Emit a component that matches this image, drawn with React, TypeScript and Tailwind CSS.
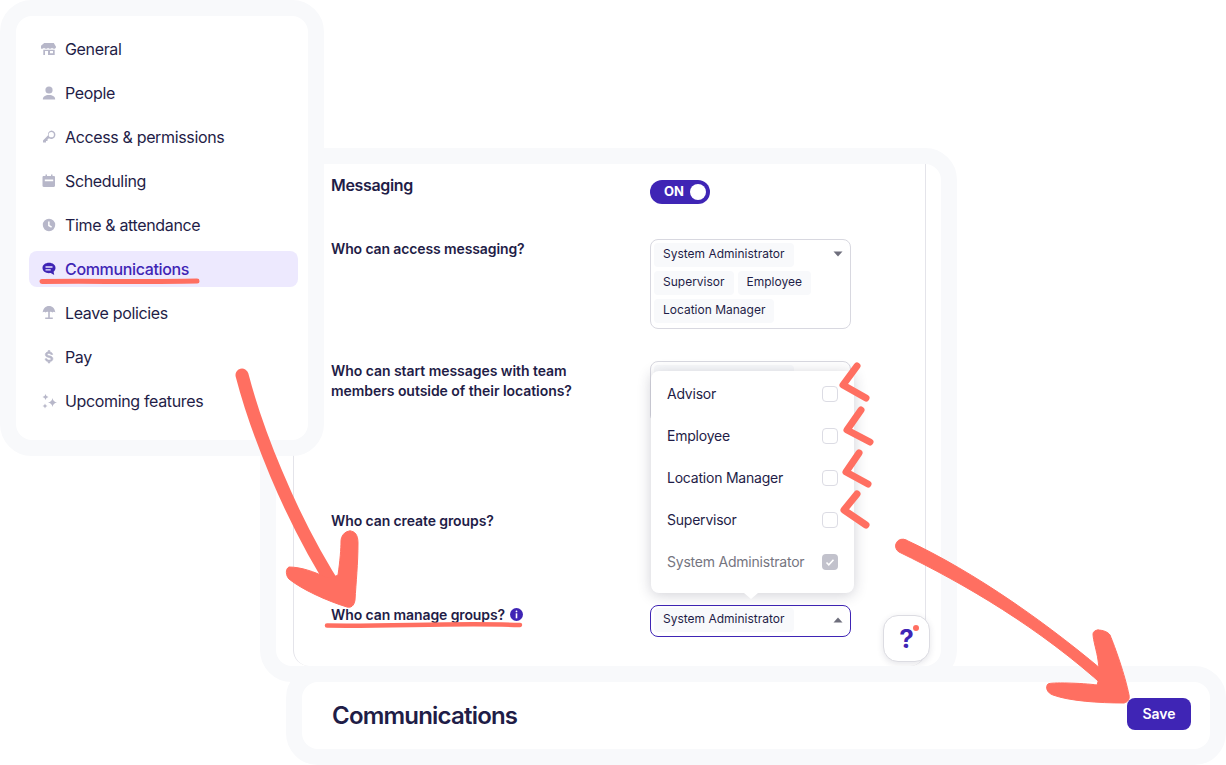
import type { ReactNode } from "react";

const navItems: { label: string; icon: ReactNode; active?: boolean }[] = [
  {
    label: "General",
    icon: (
      <>
        <path d="M3.200 2h9.600l2.200 3.700c0 1.300-1 2.100-2 2.100-.8 0-1.500-.4-2-1-.4.600-1.100 1-2 1s-1.600-.4-2-1c-.4.600-1.200 1-2 1s-1.500-.4-2-1c-.5.600-1.200 1-2 1-1 0-2-.8-2-2.100z" />
        <path fillRule="evenodd" d="M2.300 8.700h11.400v5.300H2.300zM4 10v4h3v-4zm5 0v2.300h3V10z" />
      </>
    ),
  },
  {
    label: "People",
    icon: (
      <>
        <circle cx="8" cy="5" r="3.600" />
        <path d="M1.800 14.500c0-2.900 2.500-4.500 6.200-4.500s6.200 1.600 6.200 4.500z" />
      </>
    ),
  },
  {
    label: "Access & permissions",
    icon: (
      <path
        fillRule="evenodd"
        d="M10.300 1.500a4.200 4.200 0 1 1-2.400 7.700l-1.400 1.400v1.500H5v1.500H2v-2.200l5.100-5.100a4.200 4.200 0 0 1 3.200-4.800zm0 1.600a2.600 2.600 0 1 0 0 5.200 2.600 2.600 0 0 0 0-5.200z"
      />
    ),
  },
  {
    label: "Scheduling",
    icon: (
      <path
        fillRule="evenodd"
        d="M4.500 1.500h1.500V3h4V1.500h1.500V3h1.300c.7 0 1.200.5 1.200 1.200v8.600c0 .7-.5 1.200-1.200 1.200H2.700c-.7 0-1.200-.5-1.200-1.200V4.200C1.500 3.500 2 3 2.700 3h1.800zM3.800 6.500v1.700h8.400V6.500z"
      />
    ),
  },
  {
    label: "Time & attendance",
    icon: (
      <path
        fillRule="evenodd"
        d="M8 1.800a6.200 6.200 0 1 1 0 12.400A6.200 6.200 0 0 1 8 1.800zm-.9 2.700v4.400l3.100 1.800.8-1.300-2.400-1.400V4.500z"
      />
    ),
  },
  {
    label: "Communications",
    active: true,
    icon: (
      <path
        fillRule="evenodd"
        d="M8 1.800c3.700 0 6.500 2.200 6.500 5.200 0 1.500-.7 2.800-1.900 3.700l.6 3.200-3.500-1.800c-.5.100-1.100.1-1.700.1-3.700 0-6.500-2.200-6.500-5.200S4.300 1.800 8 1.800zM4.500 5.300v1.500h7V5.300zm0 2.900v1.400h5.200V8.200z"
      />
    ),
  },
  {
    label: "Leave policies",
    icon: (
      <>
        <path d="M8 1c3.400 0 6.100 2.700 6.300 6.500-.9-.9-1.900-.9-2.800 0-.7-.8-1.600-1-2.700-.6V8H7.200V6.900c-1.100-.4-2-.2-2.700.6-.9-.9-1.900-.9-2.800 0C1.900 3.700 4.600 1 8 1z" />
        <path d="M7.200 8h1.600v4.500h3V14H4.200v-1.500h3z" />
      </>
    ),
  },
  {
    label: "Pay",
    icon: (
      <path
        stroke="currentColor"
        strokeWidth=".6"
        d="M7.200 1.500h1.600v1.400c1.500.2 2.700 1.100 2.900 2.600H9.900c-.2-.7-.9-1.100-1.900-1.100-1.100 0-1.800.4-1.800 1.100 0 .8.800 1 2.100 1.300 1.900.4 3.600 1 3.600 3 0 1.600-1.200 2.500-3.100 2.800v1.400H7.200v-1.400c-1.700-.2-3-1.200-3.100-2.800H6c.1.800.9 1.300 2 1.300 1.200 0 1.900-.4 1.900-1.200 0-.8-.8-1.100-2.200-1.400-1.800-.4-3.400-1-3.400-2.900 0-1.500 1.200-2.500 2.900-2.800z"
      />
    ),
  },
  {
    label: "Upcoming features",
    icon: (
      <>
        <path d="M11.500 5q.6 3.900 4.500 4.500-3.900.6-4.500 4.500-.6-3.900-4.500-4.500 3.900-.6 4.500-4.500z" />
        <path d="M4.500 1q.4 2.600 3 3-2.600.4-3 3-.4-2.600-3-3 2.600-.4 3-3z" />
        <path d="M4 10.500q.3 2.200 2.500 2.500-2.200.3-2.500 2.500-.3-2.200-2.500-2.500 2.200-.3 2.500-2.500z" />
      </>
    ),
  },
];

const Chip = ({ children }: { children: ReactNode }) => (
  <span className="h-6 px-[9px] pb-[2px] flex items-center rounded bg-[#f8f9fb] text-xs whitespace-nowrap">
    {children}
  </span>
);

const Caret = ({ up }: { up?: boolean }) => (
  <svg width="10" height="6" viewBox="0 0 10 6" className="absolute right-[7px] top-[11px] fill-[#6e6e7c]">
    <path d={up ? "M5 .5l4.500 5h-9z" : "M.5.500h9l-4.500 5z"} />
  </svg>
);

const roles = ["Advisor", "Employee", "Location Manager", "Supervisor"];

const SelectBox = ({ chips, className, up }: { chips: string[]; className: string; up?: boolean }) => (
  <div className={`relative w-[201px] rounded-lg border bg-white pl-[3px] flex flex-wrap gap-1 content-start ${className}`}>
    {chips.map((chip) => (
      <Chip key={chip}>{chip}</Chip>
    ))}
    <Caret up={up} />
  </div>
);

const RolePopup = () => (
  <div className="absolute left-[357px] top-[207px] w-[203px] h-[222px] bg-white rounded-lg pt-[2px] tracking-[-0.22px] shadow-[0_2px_14px_rgba(40,40,70,0.22)]">
    {roles.map((role) => (
      <div key={role} className="h-[42px] pl-4 pr-4 flex items-center justify-between text-sm text-[#1f1d47]">
        {role}
        <span className="w-4 h-4 rounded border border-[#dcdce4] bg-white" />
      </div>
    ))}
    <div className="h-[42px] pl-4 pr-4 flex items-center justify-between text-sm text-[#75757f]">
      System Administrator
      <span className="w-4 h-4 rounded bg-[#c2c2cc] flex items-center justify-center">
        <svg width="10" height="10" viewBox="0 0 10 10" fill="none" stroke="white" strokeWidth="1.600">
          <path d="M1.500 5.500l2.300 2.300 4.700-5" />
        </svg>
      </span>
    </div>
    <div className="absolute left-[93px] bottom-[-6px] w-0 h-0 border-x-[7px] border-x-transparent border-t-[6px] border-t-white" />
  </div>
);

const Annotations = () => (
  <svg width="1226" height="765" viewBox="0 0 1226 765" className="absolute inset-0 z-30 pointer-events-none" fill="none" stroke="#ff6f61" strokeLinecap="round" strokeLinejoin="round">
    <path d="M42 281.500c50-.5 100 .5 155-.5" strokeWidth="5" />
    <path d="M327 625.500c65 1 130-3 193-.5" strokeWidth="4.500" />
    <path d="M242 375c13 50 46 140 96 217" strokeWidth="13" />
    <path d="M350 531c5 0 8 4 8 12 0 20-2 40-3 57-1 6-4 8-8 7-20-6-46-18-58-28-3-3-4-10 0-12 12 0 26 5 36 10 4 1 10 0 13-2 2-14 3-26 3-34 0-4 3-10 9-10z" fill="#ff6f61" strokeWidth="1" />
    <path d="M906 540C975 572 1050 625 1114 680L1106 688C1040 628 965 584 899 552A6.500 6.500 0 0 1 906 540z" fill="#ff6f61" strokeWidth="1" />
    <path d="M1098 630c5 0 10 2 12 5 5 12 15 40 19 60 1 4-1 7-5 8-25 0-55-2-71-8-6-2-8-8-5-11 2-2 35-1 49 1 3-8 2-18 1-25-1-8-5-20-5-26 0-2 2-4 5-4z" fill="#ff6f61" strokeWidth="1" />
    <path d="M857 366l-14 19 23 13" strokeWidth="7" />
    <path d="M861 410l-14 20 23 12" strokeWidth="7" />
    <path d="M859 453l-13 19 22 12" strokeWidth="7" />
    <path d="M857 494l-13 16 22 15" strokeWidth="7" />
  </svg>
);

export default function App() {
  return (
    <div className="relative w-[1226px] h-[765px] overflow-hidden bg-white font-[Inter,sans-serif] text-[#1f1d47]">
      {/* messaging settings window */}
      <div className="absolute left-[260px] top-[148px] w-[697px] h-[534px] rounded-[32px] border-16 border-[#f8f9fb] bg-white">
        <div className="relative ml-[17px] mr-[15px] h-full rounded-b-2xl border-x border-[#e4e4ea] pl-[37px] pt-[9px]">
          <div className="flex h-[66px]">
            <div className="w-[319px] text-base font-semibold leading-6 tracking-[-0.35px]">Messaging</div>
            <div className="mt-[7px] w-[60px] h-6 rounded-full bg-[#3f25b5] flex items-center justify-between pl-[14px] pr-[4px]">
              <span className="text-[13px] font-bold text-white">ON</span>
              <span className="w-4 h-4 rounded-full bg-white" />
            </div>
          </div>
          <div className="flex h-[122px]">
            <div className="w-[319px] text-sm font-semibold leading-5 tracking-[-0.12px]">Who can access messaging?</div>
            <SelectBox chips={["System Administrator", "Supervisor", "Employee", "Location Manager"]} className="h-[90px] pt-[3px] border-[#d8d8e0]" />
          </div>
          <div className="flex h-[150px]">
            <div className="w-[319px] text-sm font-semibold leading-5 tracking-[-0.05px]">
              <div className="w-[270px]">Who can start messages with team members outside of their locations?</div>
            </div>
            {/* chip label sits under the popup, only the chip background peeks out */}
            <SelectBox chips={["System Administrator"]} className="h-[62px] pt-[3px] border-[#d8d8e0] text-transparent" />
          </div>
          <div className="h-[94px] text-sm font-semibold leading-5 tracking-[-0.1px]">Who can create groups?</div>
          <div className="flex">
            <div className="w-[319px] flex gap-[5px] text-sm font-semibold leading-5 tracking-[-0.1px]">
              Who can manage groups?
              <svg width="13" height="13" viewBox="0 0 13 13" className="mt-[3px]">
                <circle cx="6.500" cy="6.500" r="6.500" fill="#3f25b5" />
                <rect x="5.600" y="2.500" width="1.800" height="1.800" rx=".9" fill="white" />
                <rect x="5.700" y="5.300" width="1.600" height="5" fill="white" />
              </svg>
            </div>
            <SelectBox chips={["System Administrator"]} className="h-8 pt-[2px] border-[#3f25b5]" up />
          </div>
          <RolePopup />
        </div>
        <div className="absolute left-[607px] top-[451px] w-[47px] h-[47px] rounded-[15px] border border-[#dcdce2] bg-white shadow-[0_2px_6px_rgba(40,40,70,0.12)] flex items-center justify-center text-[26px] font-bold text-[#3f25b5]">
          ?
          <span className="absolute right-[10px] top-[9px] w-[6px] h-[6px] rounded-full bg-[#ff6f61]" />
        </div>
      </div>

      {/* settings nav window */}
      <aside className="absolute left-0 top-0 z-10 w-[324px] h-[456px] rounded-[32px] border-16 border-[#f8f9fb] bg-white pt-[15px] pl-[13px] pr-[10px]">
        <nav className="flex flex-col gap-2">
          {navItems.map((item) => (
            <div
              key={item.label}
              className={`h-9 rounded-lg pl-3 flex items-center gap-2 text-base tracking-[-0.35px] ${item.active ? "bg-[#ede9fe] text-[#3f25b5] font-medium" : "text-[#1f1d47]"}`}
            >
              <svg width="16" height="16" viewBox="0 0 16 16" className={item.active ? "fill-[#3f25b5] text-[#3f25b5]" : "fill-[#b7b7c9] text-[#b7b7c9]"}>
                {item.icon}
              </svg>
              {item.label}
            </div>
          ))}
        </nav>
      </aside>

      {/* footer bar window */}
      <div className="absolute left-[286px] top-[666px] z-20 w-[940px] h-[99px] rounded-[32px] border-16 border-[#f8f9fb] bg-white flex items-center justify-between pl-[30px] pr-[19px]">
        <h1 className="text-2xl font-semibold tracking-[-0.8px]">Communications</h1>
        <button className="w-16 h-8 mb-1 rounded-lg bg-[#3f25b5] text-sm font-semibold text-white">Save</button>
      </div>

      <Annotations />
    </div>
  );
}
